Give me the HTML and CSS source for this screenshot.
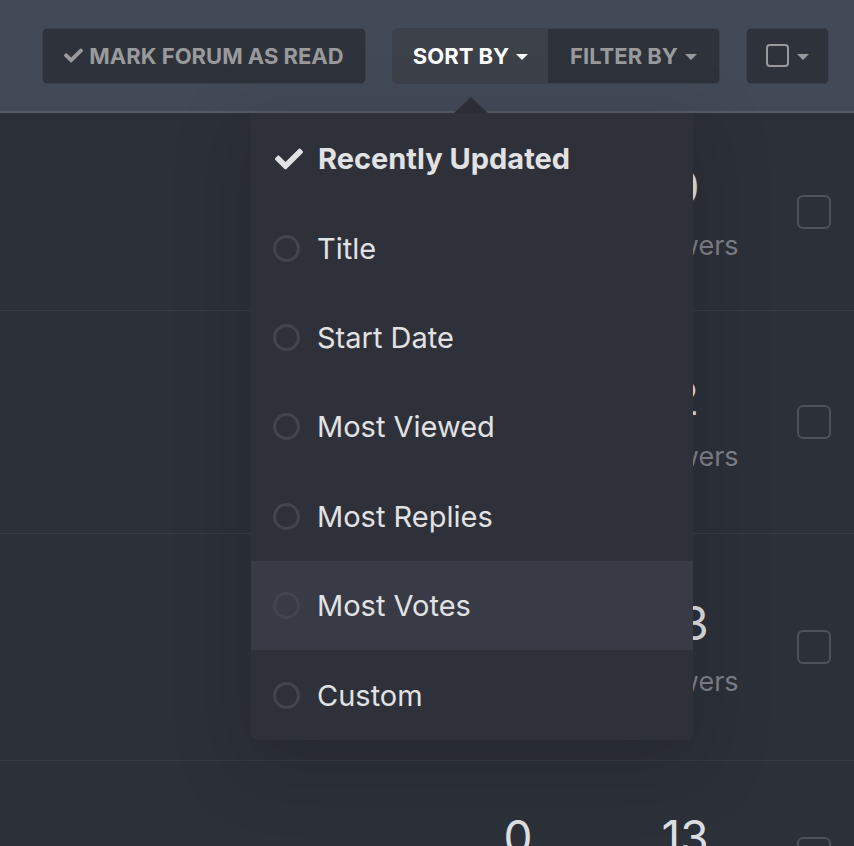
FILE: index.html
```html
<!DOCTYPE html>
<html>
<head>
<meta charset="utf-8">
<link rel="stylesheet" href="styles.css">
</head>
<body>
<header class="bar">
  <button class="btn btn-mark">
    <svg class="ico-check" viewBox="0 0 512 512" width="19" height="19"><path fill="currentColor" d="M173.9 439.4 7.5 273c-10-10-10-26.2 0-36.2l36.2-36.2c10-10 26.2-10 36.2 0L192 312.7 432.1 72.6c10-10 26.2-10 36.2 0l36.2 36.2c10 10 10 26.2 0 36.2L210.1 439.4c-10 10-26.2 10-36.2 0z"/></svg>
    MARK FORUM AS READ
  </button>
  <div class="group">
    <button class="btn seg seg-active">SORT BY <span class="caret"></span></button>
    <button class="btn seg">FILTER BY <span class="caret"></span></button>
  </div>
  <button class="btn btn-check"><span class="box"></span><span class="caret"></span></button>
  <span class="pointer"></span>
</header>

<main class="list">
  <div class="row r1">
    <div class="stat s2"><span class="num">0</span><span class="lbl">answers</span></div>
    <span class="cbox"></span>
  </div>
  <div class="row r2">
    <div class="stat s2"><span class="num">2</span><span class="lbl">answers</span></div>
    <span class="cbox"></span>
  </div>
  <div class="row r3">
    <div class="stat s2"><span class="num">13</span><span class="lbl">answers</span></div>
    <span class="cbox"></span>
  </div>
  <div class="row r4">
    <div class="stat s1"><span class="num">0</span></div>
    <div class="stat s2"><span class="num">13</span></div>
    <span class="cbox"></span>
  </div>
</main>

<ul class="menu">
  <li class="item selected">
    <svg class="ico-sel" viewBox="0 0 512 512" width="28" height="28"><path fill="currentColor" d="M173.9 439.4 7.5 273c-10-10-10-26.2 0-36.2l36.2-36.2c10-10 26.2-10 36.2 0L192 312.7 432.1 72.6c10-10 26.2-10 36.2 0l36.2 36.2c10 10 10 26.2 0 36.2L210.1 439.4c-10 10-26.2 10-36.2 0z"/></svg>
    <span>Recently Updated</span>
  </li>
  <li class="item"><span class="radio"></span><span>Title</span></li>
  <li class="item"><span class="radio"></span><span>Start Date</span></li>
  <li class="item"><span class="radio"></span><span>Most Viewed</span></li>
  <li class="item"><span class="radio"></span><span>Most Replies</span></li>
  <li class="item hover"><span class="radio"></span><span>Most Votes</span></li>
  <li class="item"><span class="radio"></span><span>Custom</span></li>
</ul>
</body>
</html>
```

FILE: styles.css
```css
* { box-sizing: border-box; }
html, body {
  margin: 0;
  padding: 0;
  height: 100%;
  overflow: hidden;
}
body {
  background: #2c3039;
  font-family: Inter, "Noto Sans", sans-serif;
  color: #e1e1e3;
  position: relative;
}

.bar {
  height: 113px;
  background: #434a57;
  border-bottom: 2px solid #565c68;
  display: flex;
  align-items: center;
  justify-content: flex-end;
  gap: 26px;
  padding: 0 25px 0 0;
  position: relative;
}

.btn {
  height: 56px;
  border: 1px solid #3c414c;
  background: #2e323b;
  color: #9a9a9c;
  font-family: Inter, sans-serif;
  font-weight: 700;
  font-size: 22px;
  letter-spacing: 0;
  border-radius: 5px;
  display: flex;
  align-items: center;
  justify-content: center;
  gap: 6px;
  padding: 0;
  cursor: pointer;
}
.btn-mark { width: 324px; }
.ico-check { color: #9a9a9c; }

.group {
  display: flex;
  border: 1px solid #3c414c;
  border-radius: 5px;
  overflow: hidden;
}
.seg {
  border: 0;
  border-radius: 0;
  height: 54px;
  gap: 7px;
}
.seg:first-child { width: 155px; }
.seg:last-child { width: 171px; }
.seg-active { background: #3d414a; color: #ffffff; }

.caret {
  width: 0;
  height: 0;
  border-left: 6px solid transparent;
  border-right: 6px solid transparent;
  border-top: 6px solid currentColor;
  margin-top: 2px;
}
.btn-check { width: 83px; gap: 8px; }
.btn-check .caret { color: #9a9a9c; }
.box {
  width: 23px;
  height: 23px;
  border: 2px solid #9a9a9c;
  border-radius: 4px;
}

.pointer {
  position: absolute;
  left: 454px;
  bottom: -2px;
  width: 0;
  height: 0;
  border-left: 17px solid transparent;
  border-right: 17px solid transparent;
  border-bottom: 16px solid #2e313a;
}

.list { display: flex; flex-direction: column; }
.row {
  display: grid;
  grid-template-columns: 1fr 140px 194px 72px;
  align-items: center;
  border-bottom: 1px solid #383c45;
}
.r1 { height: 198px; }
.r2 { height: 223px; }
.r3 { height: 227px; }
.r4 { height: 90px; align-items: start; overflow: hidden; border-bottom: 0; }
.stat {
  display: flex;
  flex-direction: column;
  align-items: center;
  line-height: 1;
}
.s1 { grid-column: 2; }
.s2 { grid-column: 3; }
.num { font-size: 46px; color: #dddee0; font-weight: 400; }
.lbl { font-size: 27px; color: #7d8189; margin-top: 22px; }
.cbox {
  grid-column: 4;
  width: 34px;
  height: 34px;
  border: 2px solid #4e525b;
  border-radius: 6px;
  margin-left: 15px;
}
.r4 .stat { padding-top: 53px; }
.r4 .cbox { margin-top: 76px; }

.menu {
  position: absolute;
  left: 251px;
  top: 113px;
  width: 442px;
  height: 627px;
  margin: 0;
  padding: 1px 0 0;
  list-style: none;
  background: #2e313a;
  border-radius: 0 0 8px 8px;
  box-shadow: 0 20px 70px 14px rgba(0, 0, 0, 0.13);
}
.item {
  height: 89.4px;
  display: flex;
  align-items: center;
  gap: 17px;
  padding-left: 22px;
  font-size: 29px;
  color: #e2e2e4;
}
.item.selected { font-weight: 700; padding-left: 24px; gap: 15px; }
.ico-sel { color: #e2e2e4; }
.item.hover { background: #383b45; }
.radio {
  width: 27px;
  height: 27px;
  border: 3px solid #41454e;
  border-radius: 50%;
  flex: none;
}
```
